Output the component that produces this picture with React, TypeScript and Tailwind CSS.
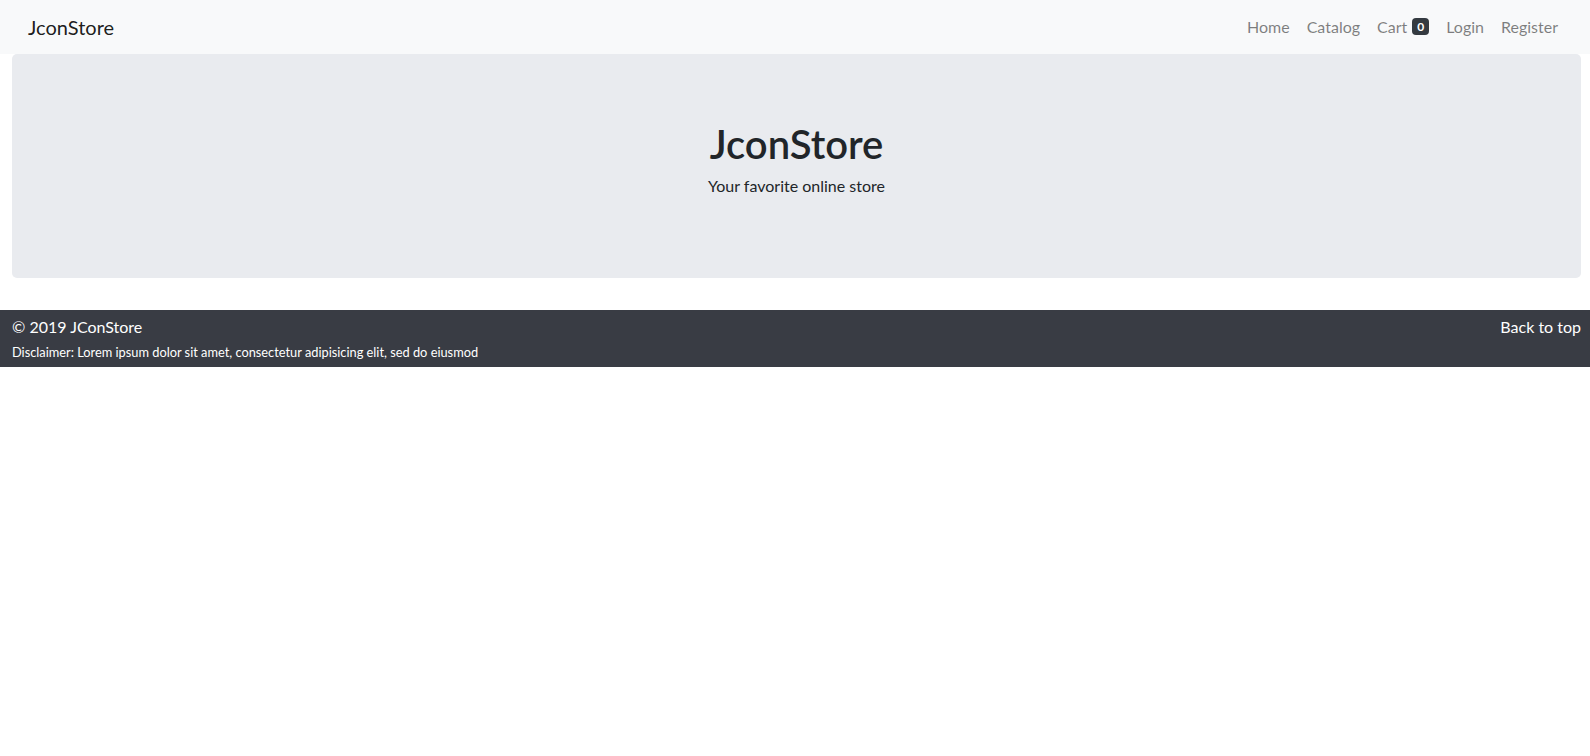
const FONT = "font-['Lato',sans-serif]";

function NavLink({ children }: { children: React.ReactNode }) {
  return <a className="text-[16px] text-black/50 leading-6">{children}</a>;
}

export default function App() {
  return (
    <div className={`min-h-screen bg-white ${FONT} text-[#212529]`}>
      <nav className="flex h-[54px] items-center justify-between bg-[#f8f9fa] pl-[28px] pr-[32px]">
        <a className="mb-[1px] text-[20px] leading-[30px] text-black/90">JconStore</a>
        <div className="mb-[1px] flex items-center gap-[17px] pl-[3px]">
          <NavLink>Home</NavLink>
          <NavLink>Catalog</NavLink>
          <span className="flex items-center gap-[5px]">
            <NavLink>Cart</NavLink>
            <span className="flex h-[17px] w-[17px] items-center justify-center rounded-[4px] bg-[#343a40] text-[12px] font-bold text-white">
              0
            </span>
          </span>
          <NavLink>Login</NavLink>
          <NavLink>Register</NavLink>
        </div>
      </nav>

      <div className="pl-[12px] pr-[9px]">
        <section className="flex h-[224px] flex-col items-center rounded-[5px] bg-[#e9ebef] pt-[66px]">
          <h1 className="text-[40px] font-semibold leading-[48px]">JconStore</h1>
          <p className="mt-[6px] text-[16px] leading-6">Your favorite online store</p>
        </section>
      </div>

      <footer className="mt-[32px] flex h-[57px] items-start justify-between bg-[#393c44] pl-[12px] pr-[9px] pt-[5px] text-white">
        <div className="flex flex-col gap-[4px]">
          <p className="text-[16px] leading-6">© 2019 JConStore</p>
          <p className="text-[12.8px] leading-[19px]">
            Disclaimer: Lorem ipsum dolor sit amet, consectetur adipisicing elit, sed do eiusmod
          </p>
        </div>
        <a className="text-[16px] leading-6">Back to top</a>
      </footer>
    </div>
  );
}
